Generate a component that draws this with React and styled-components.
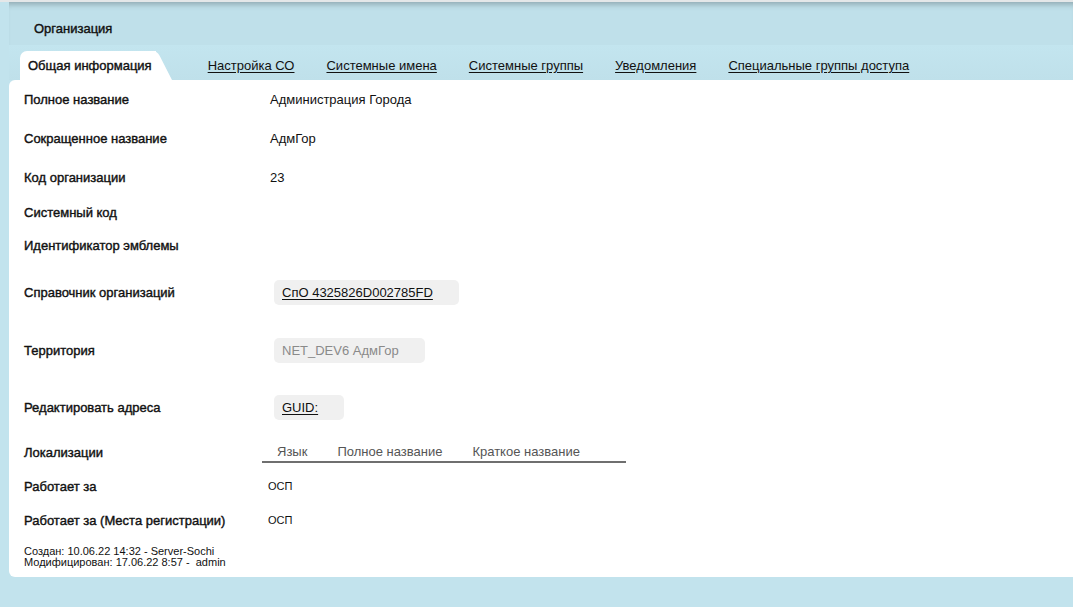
import React from 'react';
import styled, { createGlobalStyle, css } from 'styled-components';

const GlobalStyle = createGlobalStyle`
  html, body {
    margin: 0;
    padding: 0;
    background: #c0e0ea;
    font-family: "Liberation Sans", Arial, sans-serif;
    font-size: 13px;
    color: #111;
  }
`;

// labels in the reference are heavier than regular but narrower than bold
const semibold = css`
  font-weight: normal;
  -webkit-text-stroke: 0.4px #111;
  color: #111;
`;

const Page = styled.div`
  width: 1073px;
  height: 607px;
  overflow: hidden;
  background: #c2e3ed;
  border-top: 2px solid #e4e7e8;
  box-sizing: border-box;
`;

const Panel = styled.div`
  margin-left: 9px;
  display: flex;
  flex-direction: column;
`;

const Header = styled.div`
  height: 43px;
  display: flex;
  align-items: center;
  padding: 9px 0 0 25px;
  box-sizing: border-box;
  background: #bfe0ea;
  box-shadow: inset 0 7px 6px -5px rgba(0, 0, 0, 0.28);
  font-size: 13px;
  ${semibold};
`;

const TabBar = styled.div`
  height: 35px;
  display: flex;
  align-items: flex-end;
  padding-left: 11px;
  background: linear-gradient(#c3e5ef, #bfe0ea);
`;

const ActiveTab = styled.div`
  position: relative;
  height: 29px;
  display: flex;
  align-items: center;
  padding: 0 4px 0 8px;
  background: #fff;
  border-top-left-radius: 7px;
  margin-right: 52px;
  ${semibold};

  &::after {
    content: '';
    position: absolute;
    top: 0;
    right: -16px;
    width: 24px;
    height: 29px;
    background: #fff;
    border-top-right-radius: 5px;
    transform: skewX(27deg);
    transform-origin: bottom left;
  }

  span {
    position: relative;
    z-index: 1;
  }
`;

const TabLink = styled.a`
  height: 29px;
  display: flex;
  align-items: center;
  margin-right: 32px;
  color: #111;
  text-decoration: underline;
  text-underline-offset: 2px;
  cursor: pointer;
`;

const Content = styled.div`
  background: #fff;
  border-radius: 6px 0 0 6px;
  padding: 0 0 10px 15px;
  height: 497px;
  box-sizing: border-box;
`;

const Row = styled.div`
  display: grid;
  grid-template-columns: 246px 1fr;
  align-items: center;
  height: ${({ h }) => h}px;
`;

const Label = styled.div`
  ${semibold};
`;

const Value = styled.div`
  font-size: ${({ small }) => (small ? '11px' : '13px')};
  margin-left: ${({ small }) => (small ? '-2px' : '0')};
  color: #111;
`;

const Chip = styled.div`
  display: inline-flex;
  align-items: center;
  height: 25px;
  margin-left: 4px;
  padding: 0 ${({ pr }) => pr}px 0 8px;
  background: #f0f0f0;
  border-radius: 5px;
  color: ${({ muted }) => (muted ? '#8a8a8a' : '#111')};
  text-decoration: ${({ link }) => (link ? 'underline' : 'none')};
  text-underline-offset: 2px;
  justify-self: start;
`;

const LocTable = styled.div`
  margin-left: -8px;
  width: 364px;
  display: flex;
  border-bottom: 2px solid #6f6f6f;
  padding-bottom: 2px;
  margin-top: 3px;
`;

const LocHead = styled.div`
  padding: 0 15px;
  color: #555;
`;

const Footer = styled.div`
  padding-top: 10px;
  font-size: 11px;
  line-height: 11px;
  color: #111;
`;

const tabs = [
  'Настройка СО',
  'Системные имена',
  'Системные группы',
  'Уведомления',
  'Специальные группы доступа',
];

export default function App() {
  return (
    <Page>
      <GlobalStyle />
      <Panel>
        <Header>Организация</Header>
        <TabBar>
          <ActiveTab>
            <span>Общая информация</span>
          </ActiveTab>
          {tabs.map((t) => (
            <TabLink key={t}>{t}</TabLink>
          ))}
        </TabBar>
        <Content>
          <Row h={39}>
            <Label>Полное название</Label>
            <Value>Администрация Города</Value>
          </Row>
          <Row h={39}>
            <Label>Сокращенное название</Label>
            <Value>АдмГор</Value>
          </Row>
          <Row h={39}>
            <Label>Код организации</Label>
            <Value>23</Value>
          </Row>
          <Row h={31}>
            <Label>Системный код</Label>
            <Value />
          </Row>
          <Row h={35}>
            <Label>Идентификатор эмблемы</Label>
            <Value />
          </Row>
          <Row h={58}>
            <Label>Справочник организаций</Label>
            <Chip link pr={26}>СпО 4325826D002785FD</Chip>
          </Row>
          <Row h={58}>
            <Label>Территория</Label>
            <Chip muted pr={26}>NET_DEV6 АдмГор</Chip>
          </Row>
          <Row h={57}>
            <Label>Редактировать адреса</Label>
            <Chip link pr={26}>GUID:</Chip>
          </Row>
          <Row h={32}>
            <Label>Локализации</Label>
            <LocTable>
              <LocHead>Язык</LocHead>
              <LocHead>Полное название</LocHead>
              <LocHead>Краткое название</LocHead>
            </LocTable>
          </Row>
          <Row h={36}>
            <Label>Работает за</Label>
            <Value small>ОСП</Value>
          </Row>
          <Row h={32}>
            <Label>Работает за (Места регистрации)</Label>
            <Value small>ОСП</Value>
          </Row>
          <Footer>
            Создан: 10.06.22 14:32 - Server-Sochi
            <br />
            Модифицирован: 17.06.22 8:57 -&nbsp; admin
          </Footer>
        </Content>
      </Panel>
    </Page>
  );
}
